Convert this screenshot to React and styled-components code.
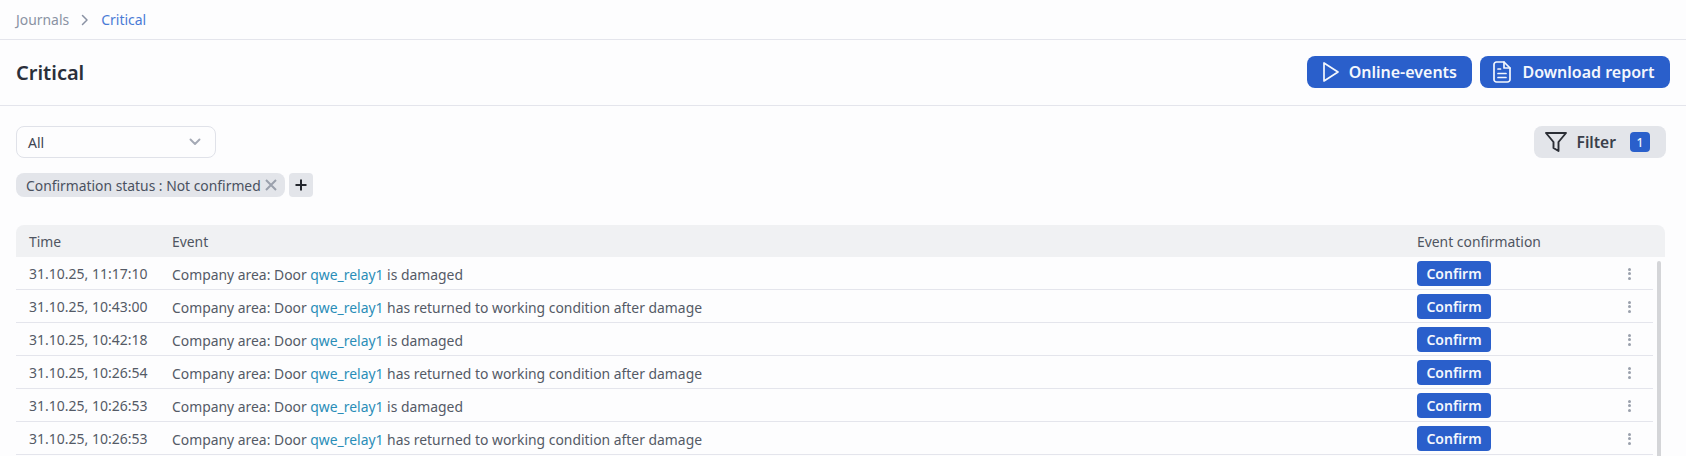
import React from "react";
import styled, { createGlobalStyle } from "styled-components";

const GlobalStyle = createGlobalStyle`
  html, body {
    margin: 0;
    padding: 0;
    height: 100%;
    overflow: hidden;
    background: #fdfdfe;
    font-family: "Noto Sans", "Open Sans", sans-serif;
  }
`;

const events = [
  { time: "31.10.25, 11:17:10", text: "is damaged" },
  { time: "31.10.25, 10:43:00", text: "has returned to working condition after damage" },
  { time: "31.10.25, 10:42:18", text: "is damaged" },
  { time: "31.10.25, 10:26:54", text: "has returned to working condition after damage" },
  { time: "31.10.25, 10:26:53", text: "is damaged" },
  { time: "31.10.25, 10:26:53", text: "has returned to working condition after damage" },
];

const Page = styled.div`
  width: 1686px;
  height: 456px;
  overflow: hidden;
`;

const Breadcrumbs = styled.nav`
  height: 39px;
  box-sizing: content-box;
  border-bottom: 1.5px solid #e4e5ec;
  padding-left: 16px;
  display: flex;
  align-items: center;
  gap: 12px;
  font-size: 13.9px;
  color: #8a92a3;
`;

const CurrentCrumb = styled.span`
  color: #4a7bd6;
  font-size: 14px;
`;

const PageHeader = styled.header`
  height: 66px;
  box-sizing: border-box;
  border-bottom: 1.5px solid #e4e5ec;
  padding: 0 16px 1px 16px;
  display: flex;
  align-items: center;
  justify-content: space-between;
`;

const Title = styled.h1`
  margin: 0;
  font-size: 20px;
  font-weight: 600;
  color: #2a2f3a;
`;

const Actions = styled.div`
  display: flex;
  gap: 8px;
`;

const PrimaryButton = styled.button`
  height: 32px;
  padding: 0 15.5px 0 12px;
  border: 0;
  border-radius: 8px;
  background: #2a5fcb;
  color: #f4f7fd;
  display: flex;
  align-items: center;
  gap: 10px;
  font: 600 16px "Noto Sans", sans-serif;
`;

const Toolbar = styled.div`
  padding: 20px 20px 0 16px;
  display: flex;
  align-items: center;
  justify-content: space-between;
`;

const Select = styled.div`
  width: 200px;
  height: 32px;
  box-sizing: border-box;
  border: 1.5px solid #e0e2e9;
  border-radius: 8px;
  padding: 0 14px 0 11px;
  display: flex;
  align-items: center;
  justify-content: space-between;
  font-size: 14px;
  color: #3f4552;
`;

const FilterButton = styled.button`
  height: 32px;
  padding: 0 16px 0 11px;
  border: 0;
  border-radius: 8px;
  background: #e3e5ea;
  color: #3a3f4a;
  display: flex;
  align-items: center;
  gap: 10px;
  font: 600 15.6px "Noto Sans", sans-serif;
`;

const FilterCount = styled.span`
  width: 20px;
  height: 20px;
  margin-left: 4px;
  border-radius: 4px;
  background: #2a5fcb;
  color: #f4f7fd;
  font-size: 12px;
  font-weight: 500;
  display: flex;
  align-items: center;
  justify-content: center;
`;

const Chips = styled.div`
  padding: 15px 0 0 16px;
  display: flex;
  gap: 4px;
`;

const Chip = styled.div`
  height: 24px;
  padding: 0 8px 0 10px;
  border-radius: 8px;
  background: #e3e5ea;
  color: #4a5160;
  display: flex;
  align-items: center;
  gap: 4px;
  font-size: 13.87px;
`;

const AddChip = styled.div`
  width: 24px;
  height: 24px;
  border-radius: 4px;
  background: #e3e5ea;
  display: flex;
  align-items: center;
  justify-content: center;
`;

const Table = styled.section`
  position: relative;
  margin: 28px 21px 0 16px;
`;

const columns = "156px 1245px 200px 1fr";

const HeadRow = styled.div`
  height: 32px;
  border-radius: 8px 8px 0 0;
  background: #f0f1f3;
  display: grid;
  grid-template-columns: ${columns};
  align-items: center;
  font-size: 13.9px;
  color: #4f5561;
`;

const Body = styled.div`
  margin-right: 12px;
`;

const Row = styled.div`
  height: 33px;
  box-sizing: border-box;
  border-bottom: 1.5px solid #e4e5ec;
  display: grid;
  grid-template-columns: ${columns};
  align-items: center;
  font-size: 13.9px;
  color: #545a66;
`;

const Cell = styled.div`
  padding-left: ${(p) => p.$pad || 0}px;
  white-space: nowrap;
`;

const TimeCell = styled(Cell)`
  font-size: 14px;
`;

const EventCell = styled(Cell)`
  margin-top: 3px;
`;

const DeviceLink = styled.span`
  color: #2a8db8;
`;

const ConfirmButton = styled.button`
  display: block;
  width: 74px;
  height: 25px;
  border: 0;
  border-radius: 4px;
  background: #2a5fcb;
  color: #f4f7fd;
  font: 600 14px "Noto Sans", sans-serif;
  padding: 0;
  margin-top: 1px;
`;

const MoreDots = styled.div`
  display: flex;
  flex-direction: column;
  gap: 1.5px;
  width: 3px;
  margin-left: 11px;
  margin-top: 1px;

  i {
    width: 3px;
    height: 3px;
    border-radius: 50%;
    background: #9aa0ac;
  }
`;

const Scrollbar = styled.div`
  position: absolute;
  top: 36px;
  right: 4px;
  width: 4px;
  height: 200px;
  background: #d4d5d8;
  border-radius: 2px 2px 0 0;
`;

const PlayIcon = () => (
  <svg width="20" height="22" viewBox="0 0 20 22" fill="none" stroke="#f4f7fd" strokeWidth="1.7" strokeLinejoin="round">
    <path d="M5 2v18L19 11z" />
  </svg>
);

const ReportIcon = () => (
  <svg width="20" height="22" viewBox="0 0 20 22" fill="none" stroke="#f4f7fd" strokeWidth="1.7" strokeLinecap="round" strokeLinejoin="round">
    <path d="M12 1H4.500A2.500 2.500 0 0 0 2 3.500v15A2.500 2.500 0 0 0 4.500 21h11a2.500 2.500 0 0 0 2.500-2.500V7z" />
    <path d="M12 1v6h6" />
    <path d="M6 8h2.500M6 12.500h8M6 16.500h8" />
  </svg>
);

const FunnelIcon = () => (
  <svg width="22" height="20" viewBox="0 0 22 20" fill="none" stroke="#2b2e35" strokeWidth="1.9" strokeLinejoin="round">
    <path d="M1 1h20l-7.500 9v9l-5-3v-6z" />
  </svg>
);

const Chevron = () => (
  <svg width="12" height="8" viewBox="0 0 12 8" fill="none" stroke="#a4a9b5" strokeWidth="1.9" strokeLinecap="round" strokeLinejoin="round">
    <path d="M1.500 1.500 6 6l4.500-4.500" />
  </svg>
);

const CrumbArrow = () => (
  <svg width="8" height="12" viewBox="0 0 8 12" fill="none" stroke="#8a92a3" strokeWidth="1.5" strokeLinecap="round" strokeLinejoin="round">
    <path d="M1.500 1.500 6 6l-4.500 4.500" />
  </svg>
);

const Cross = () => (
  <svg width="12" height="12" viewBox="0 0 12 12" fill="none" stroke="#9aa0ac" strokeWidth="2">
    <path d="M1 1l10 10M11 1 1 11" />
  </svg>
);

const Plus = () => (
  <svg width="12" height="12" viewBox="0 0 12 12" fill="none" stroke="#23262d" strokeWidth="2">
    <path d="M6 .5v11M.5 6h11" />
  </svg>
);

export default function App() {
  return (
    <Page>
      <GlobalStyle />
      <Breadcrumbs>
        <span>Journals</span>
        <CrumbArrow />
        <CurrentCrumb>Critical</CurrentCrumb>
      </Breadcrumbs>
      <PageHeader>
        <Title>Critical</Title>
        <Actions>
          <PrimaryButton>
            <PlayIcon />
            Online-events
          </PrimaryButton>
          <PrimaryButton>
            <ReportIcon />
            Download report
          </PrimaryButton>
        </Actions>
      </PageHeader>
      <Toolbar>
        <Select>
          All
          <Chevron />
        </Select>
        <FilterButton>
          <FunnelIcon />
          Filter
          <FilterCount>1</FilterCount>
        </FilterButton>
      </Toolbar>
      <Chips>
        <Chip>
          Confirmation status : Not confirmed
          <Cross />
        </Chip>
        <AddChip>
          <Plus />
        </AddChip>
      </Chips>
      <Table>
        <HeadRow>
          <Cell $pad={13}>Time</Cell>
          <Cell>Event</Cell>
          <Cell>Event confirmation</Cell>
          <Cell />
        </HeadRow>
        <Body>
          {events.map((e, i) => (
            <Row key={i}>
              <TimeCell $pad={13}>{e.time}</TimeCell>
              <EventCell>
                Company area: Door <DeviceLink>qwe_relay1</DeviceLink> {e.text}
              </EventCell>
              <Cell>
                <ConfirmButton>Confirm</ConfirmButton>
              </Cell>
              <MoreDots>
                <i />
                <i />
                <i />
              </MoreDots>
            </Row>
          ))}
        </Body>
        <Scrollbar />
      </Table>
    </Page>
  );
}
